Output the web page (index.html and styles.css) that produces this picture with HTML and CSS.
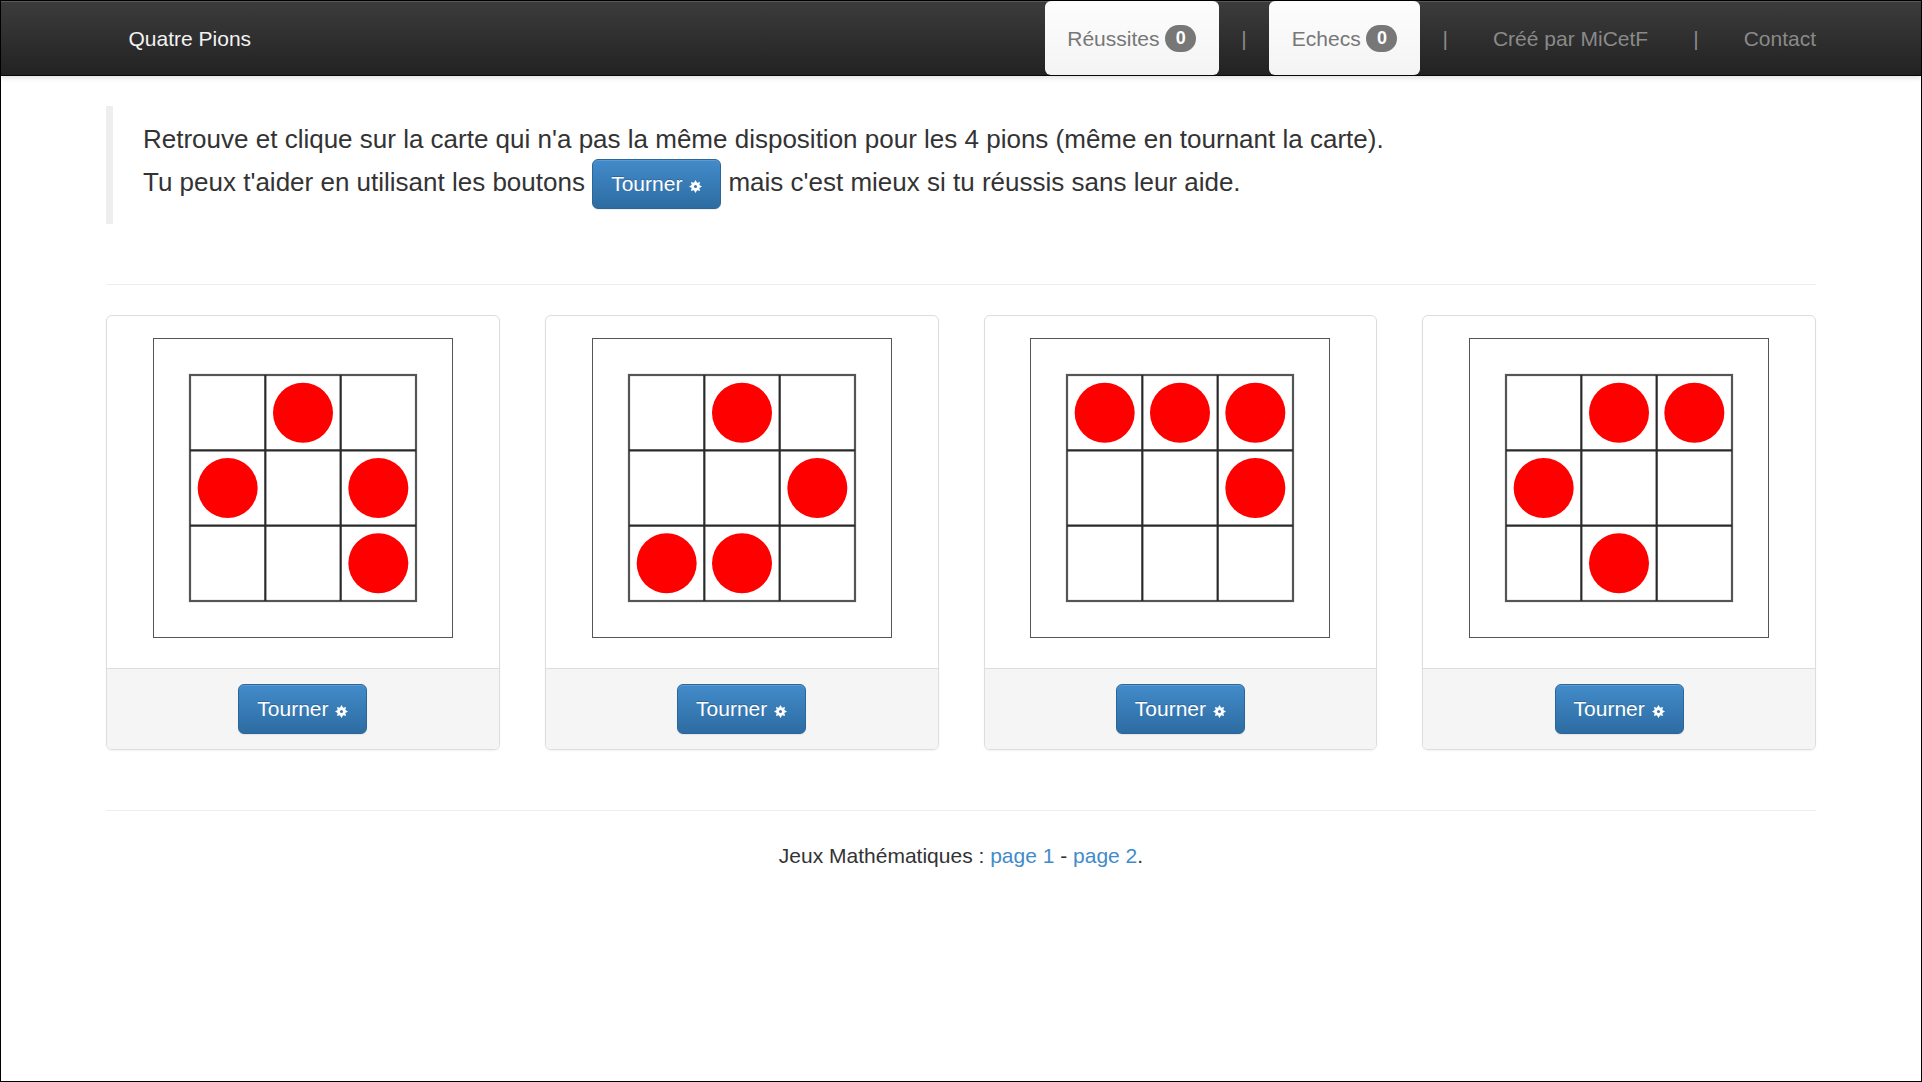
FILE: index.html
```html
<!DOCTYPE html>
<html lang="fr">
<head>
<meta charset="utf-8">
<title>Quatre Pions</title>
<link rel="stylesheet" href="styles.css">
</head>
<body>
<div class="frame">
  <nav class="navbar">
    <div class="nav-inner">
      <a class="brand">Quatre Pions</a>
      <ul class="nav-right">
        <li class="nav-item active">Réussites <span class="badge">0</span></li>
        <li class="nav-item sep">|</li>
        <li class="nav-item active">Echecs <span class="badge">0</span></li>
        <li class="nav-item sep">|</li>
        <li class="nav-item">Créé par MiCetF</li>
        <li class="nav-item sep">|</li>
        <li class="nav-item last">Contact</li>
      </ul>
    </div>
  </nav>

  <main class="container">
    <blockquote class="intro">
      <p>Retrouve et clique sur la carte qui n'a pas la même disposition pour les 4 pions (même en tournant la carte).</p>
      <p>Tu peux t'aider en utilisant les boutons <span class="btn">Tourner <svg class="ico" viewBox="0 0 12 12"><polygon points="12,6 9.51,7.45 10.24,10.24 7.45,9.51 6,12 4.55,9.51 1.76,10.24 2.49,7.45 0,6 2.49,4.55 1.76,1.76 4.55,2.49 6,0 7.45,2.49 10.24,1.76 9.51,4.55" fill="#fff"/><circle cx="6" cy="6" r="1.4" fill="#3776b0"/></svg></span> mais c'est mieux si tu réussis sans leur aide.</p>
    </blockquote>

    <hr class="rule rule-top">

    <div class="cards">
      <div class="card">
        <div class="card-body">
          <svg class="board" viewBox="0 0 298 298">
            <g class="grid"><rect x="36" y="36" width="226" height="226"/><line x1="111.33" y1="36" x2="111.33" y2="262"/><line x1="186.67" y1="36" x2="186.67" y2="262"/><line x1="36" y1="111.33" x2="262" y2="111.33"/><line x1="36" y1="186.67" x2="262" y2="186.67"/></g>
            <g class="pions"><circle cx="149" cy="73.67" r="30"/><circle cx="73.67" cy="149" r="30"/><circle cx="224.33" cy="149" r="30"/><circle cx="224.33" cy="224.33" r="30"/></g>
          </svg>
        </div>
        <div class="card-footer"><span class="btn">Tourner <svg class="ico" viewBox="0 0 12 12"><polygon points="12,6 9.51,7.45 10.24,10.24 7.45,9.51 6,12 4.55,9.51 1.76,10.24 2.49,7.45 0,6 2.49,4.55 1.76,1.76 4.55,2.49 6,0 7.45,2.49 10.24,1.76 9.51,4.55" fill="#fff"/><circle cx="6" cy="6" r="1.4" fill="#3776b0"/></svg></span></div>
      </div>

      <div class="card">
        <div class="card-body">
          <svg class="board" viewBox="0 0 298 298">
            <g class="grid"><rect x="36" y="36" width="226" height="226"/><line x1="111.33" y1="36" x2="111.33" y2="262"/><line x1="186.67" y1="36" x2="186.67" y2="262"/><line x1="36" y1="111.33" x2="262" y2="111.33"/><line x1="36" y1="186.67" x2="262" y2="186.67"/></g>
            <g class="pions"><circle cx="149" cy="73.67" r="30"/><circle cx="224.33" cy="149" r="30"/><circle cx="73.67" cy="224.33" r="30"/><circle cx="149" cy="224.33" r="30"/></g>
          </svg>
        </div>
        <div class="card-footer"><span class="btn">Tourner <svg class="ico" viewBox="0 0 12 12"><polygon points="12,6 9.51,7.45 10.24,10.24 7.45,9.51 6,12 4.55,9.51 1.76,10.24 2.49,7.45 0,6 2.49,4.55 1.76,1.76 4.55,2.49 6,0 7.45,2.49 10.24,1.76 9.51,4.55" fill="#fff"/><circle cx="6" cy="6" r="1.4" fill="#3776b0"/></svg></span></div>
      </div>

      <div class="card">
        <div class="card-body">
          <svg class="board" viewBox="0 0 298 298">
            <g class="grid"><rect x="36" y="36" width="226" height="226"/><line x1="111.33" y1="36" x2="111.33" y2="262"/><line x1="186.67" y1="36" x2="186.67" y2="262"/><line x1="36" y1="111.33" x2="262" y2="111.33"/><line x1="36" y1="186.67" x2="262" y2="186.67"/></g>
            <g class="pions"><circle cx="73.67" cy="73.67" r="30"/><circle cx="149" cy="73.67" r="30"/><circle cx="224.33" cy="73.67" r="30"/><circle cx="224.33" cy="149" r="30"/></g>
          </svg>
        </div>
        <div class="card-footer"><span class="btn">Tourner <svg class="ico" viewBox="0 0 12 12"><polygon points="12,6 9.51,7.45 10.24,10.24 7.45,9.51 6,12 4.55,9.51 1.76,10.24 2.49,7.45 0,6 2.49,4.55 1.76,1.76 4.55,2.49 6,0 7.45,2.49 10.24,1.76 9.51,4.55" fill="#fff"/><circle cx="6" cy="6" r="1.4" fill="#3776b0"/></svg></span></div>
      </div>

      <div class="card">
        <div class="card-body">
          <svg class="board" viewBox="0 0 298 298">
            <g class="grid"><rect x="36" y="36" width="226" height="226"/><line x1="111.33" y1="36" x2="111.33" y2="262"/><line x1="186.67" y1="36" x2="186.67" y2="262"/><line x1="36" y1="111.33" x2="262" y2="111.33"/><line x1="36" y1="186.67" x2="262" y2="186.67"/></g>
            <g class="pions"><circle cx="149" cy="73.67" r="30"/><circle cx="224.33" cy="73.67" r="30"/><circle cx="73.67" cy="149" r="30"/><circle cx="149" cy="224.33" r="30"/></g>
          </svg>
        </div>
        <div class="card-footer"><span class="btn">Tourner <svg class="ico" viewBox="0 0 12 12"><polygon points="12,6 9.51,7.45 10.24,10.24 7.45,9.51 6,12 4.55,9.51 1.76,10.24 2.49,7.45 0,6 2.49,4.55 1.76,1.76 4.55,2.49 6,0 7.45,2.49 10.24,1.76 9.51,4.55" fill="#fff"/><circle cx="6" cy="6" r="1.4" fill="#3776b0"/></svg></span></div>
      </div>
    </div>

    <hr class="rule rule-bottom">

    <p class="footer">Jeux Mathématiques : <a class="link">page 1</a> - <a class="link">page 2</a>.</p>
  </main>
</div>
</body>
</html>
```

FILE: styles.css
```css
* { box-sizing: border-box; }

html, body {
  margin: 0;
  padding: 0;
  background: #fff;
}

body {
  font-family: "Liberation Sans", Arial, Helvetica, sans-serif;
  font-size: 21px;
  line-height: 30px;
  color: #333;
}

.frame {
  border: 1px solid #000;
  height: 1082px;
  overflow: hidden;
}

/* ---------- navbar ---------- */
.navbar {
  height: 75px;
  background: linear-gradient(to bottom, #3c3c3c 0%, #222 100%);
  border-bottom: 1px solid #080808;
  box-shadow: inset 0 1px 0 rgba(255,255,255,.15), 0 2px 5px rgba(0,0,0,.12);
  position: relative;
  z-index: 2;
}

.nav-inner {
  width: 1710px;
  margin: 0 auto;
  height: 74px;
  display: flex;
  align-items: stretch;
  justify-content: space-between;
}

.brand {
  display: flex;
  align-items: center;
  padding: 1px 22.5px 0;
  color: #f2f2f2;
  font-size: 21px;
}

.nav-right {
  list-style: none;
  margin: 0 -22.5px 0 0;
  padding: 0;
  display: flex;
  align-items: stretch;
}

.nav-item {
  display: flex;
  align-items: center;
  padding: 1px 22.5px 0;
  color: #8a8a8a;
  white-space: pre;
}

.nav-item.active {
  background: linear-gradient(to bottom, #fdfdfd 0%, #f4f4f4 100%);
  color: #777;
  border-radius: 6px;
}

.badge {
  display: inline-block;
  min-width: 31px;
  padding: 0 10.5px;
  height: 27px;
  line-height: 27px;
  border-radius: 15px;
  background: #777;
  color: #fff;
  font-size: 18px;
  font-weight: bold;
  text-align: center;
}

/* ---------- main ---------- */
.container {
  width: 1710px;
  margin: 0 auto;
}

.intro {
  margin: 30px 0 60px;
  padding: 15px 30px;
  border-left: 7.5px solid #eee;
  font-size: 26px;
  line-height: 37.5px;
}

.intro p {
  margin: 0;
}

.rule {
  border: 0;
  border-top: 1px solid #eee;
  margin: 0;
}

.rule-top { margin-bottom: 30px; }
.rule-bottom { margin-top: 60px; margin-bottom: 30px; }

/* ---------- button ---------- */
.btn {
  display: inline-block;
  vertical-align: middle;
  padding: 9px 18px;
  font-size: 21px;
  line-height: 30px;
  color: #fff;
  background: linear-gradient(to bottom, #428bca 0%, #2d6ca2 100%);
  border: 1px solid #2b669a;
  border-radius: 6px;
  text-shadow: 0 -1px 0 rgba(0,0,0,.2);
  box-shadow: inset 0 1px 0 rgba(255,255,255,.15), 0 1px 1px rgba(0,0,0,.075);
  white-space: nowrap;
}

.ico {
  width: 13px;
  height: 13px;
  margin-left: 1px;
  vertical-align: -2px;
}

/* ---------- cards ---------- */
.cards {
  display: grid;
  grid-template-columns: repeat(4, 1fr);
  gap: 45px;
}

.card {
  border: 1px solid #ddd;
  border-radius: 6px;
  box-shadow: 0 1px 2px rgba(0,0,0,.05);
  background: #fff;
  overflow: hidden;
}

.card-body {
  padding: 22.5px 22.5px 30px;
  text-align: center;
  line-height: 0;
}

.board {
  width: 300px;
  height: 300px;
  border: 1px solid #555;
  background: #fff;
}

.grid rect,
.grid line {
  fill: none;
  stroke: #2a2a2a;
  stroke-width: 2.2;
}

.grid rect {
  stroke: #555;
}

.pions circle {
  fill: #ff0000;
}

.card-footer {
  background: #f5f5f5;
  border-top: 1px solid #ddd;
  padding: 15px 22.5px;
  text-align: center;
  line-height: 0;
}

/* ---------- footer ---------- */
.footer {
  margin: 0;
  text-align: center;
  font-size: 21px;
  line-height: 30px;
  color: #333;
}

.link {
  color: #428bca;
  text-decoration: none;
}
```
